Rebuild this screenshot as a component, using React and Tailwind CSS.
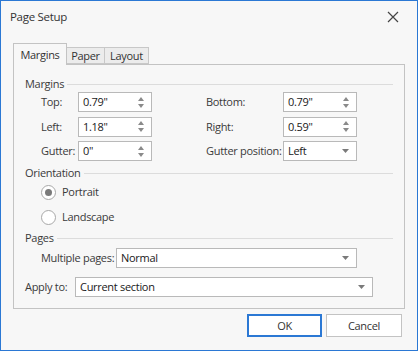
import React from "react";

const font = { fontFamily: '"Segoe UI", "Open Sans", "Noto Sans", sans-serif' };

function SpinUpDown() {
    return (
        <div className="flex flex-col items-center gap-[3px] pr-[7px]">
            <svg width="6" height="4" viewBox="0 0 6 4"><path d="M3 0 L6 4 L0 4 Z" fill="#8a8a8a" /></svg>
            <svg width="6" height="4" viewBox="0 0 6 4"><path d="M0 0 L6 0 L3 4 Z" fill="#8a8a8a" /></svg>
        </div>
    );
}

function DropArrow() {
    return (
        <div className="pr-[7px]">
            <svg width="7" height="4" viewBox="0 0 7 4"><path d="M0 0 L7 0 L3.5 4 Z" fill="#7a7a7a" /></svg>
        </div>
    );
}

function Field({ value, width, kind }) {
    return (
        <div className={`flex shrink-0 items-center justify-between h-[20px] bg-white border border-[#b9b9b9] ${width}`}>
            <span className="pl-[4px] text-[#202020] whitespace-nowrap">{value}</span>
            {kind === "spin" ? <SpinUpDown /> : <DropArrow />}
        </div>
    );
}

function Row({ label, labelWidth, children }) {
    return (
        <div className="flex items-center">
            <span className={`${labelWidth} shrink-0 whitespace-nowrap text-[#3a3a3a]`}>{label}</span>
            {children}
        </div>
    );
}

function Section({ title }) {
    return (
        <div className="flex items-center gap-[3px] h-[14px]">
            <span className="text-[#3a3a3a] whitespace-nowrap">{title}</span>
            <div className="flex-1 h-px bg-[#dcdcdc] mr-[11px]" />
        </div>
    );
}

function Radio({ label, checked }) {
    return (
        <div className="flex items-center gap-[6px] h-[16px]">
            <div className="w-[15px] h-[15px] rounded-full border border-[#a8a8a8] bg-white flex items-center justify-center">
                {checked && <div className="w-[7px] h-[7px] rounded-full bg-[#7a7a7a]" />}
            </div>
            <span className="text-[#3a3a3a]">{label}</span>
        </div>
    );
}

export default function App() {
    return (
        <div style={font} className="w-[418px] h-[351px] bg-[#f7f7f7] border border-[#2b78d4] flex flex-col text-[11px] leading-[14px] tracking-[-0.3px] text-[#333]">
            <div className="flex items-center justify-between h-[31px] pl-[9px] pr-[18px]">
                <span className="text-[#333] text-[11.5px]">Page Setup</span>
                <svg width="12" height="12" viewBox="0 0 12 12"><path d="M1 1 L11 11 M11 1 L1 11" stroke="#444" strokeWidth="1.2" /></svg>
            </div>

            <div className="flex items-end ml-[12px] mt-[10px] h-[22px]">
                <div className="relative z-10 -mb-px h-[22px] w-[54px] flex items-center justify-center border border-b-0 border-[#c3c3c3] bg-[#f7f7f7] text-[#333]">Margins</div>
                <div className="h-[17px] w-[38px] flex items-center justify-center border border-l-0 border-[#c8c8c8] bg-[#ececec] text-[#333]">Paper</div>
                <div className="h-[17px] w-[44px] flex items-center justify-center border border-l-0 border-[#c8c8c8] bg-[#ececec] text-[#333]">Layout</div>
            </div>

            <div className="ml-[12px] w-[392px] h-[245px] border border-[#c3c3c3] pl-[11px] pt-[12px] flex flex-col">
                <Section title="Margins" />
                <div className="flex pl-[16px] pt-[1px]">
                    <div className="flex flex-col gap-[4.5px] w-[165px]">
                        <Row label="Top:" labelWidth="w-[37px]"><Field value={'0.79"'} width="w-[74px]" kind="spin" /></Row>
                        <Row label="Left:" labelWidth="w-[37px]"><Field value={'1.18"'} width="w-[74px]" kind="spin" /></Row>
                        <Row label="Gutter:" labelWidth="w-[37px]"><Field value={'0"'} width="w-[74px]" kind="spin" /></Row>
                    </div>
                    <div className="flex flex-col gap-[4.5px]">
                        <Row label="Bottom:" labelWidth="w-[77px]"><Field value={'0.79"'} width="w-[74px]" kind="spin" /></Row>
                        <Row label="Right:" labelWidth="w-[77px]"><Field value={'0.59"'} width="w-[74px]" kind="spin" /></Row>
                        <Row label="Gutter position:" labelWidth="w-[77px]"><Field value="Left" width="w-[74px]" kind="drop" /></Row>
                    </div>
                </div>

                <div className="mt-[5px]"><Section title="Orientation" /></div>
                <div className="flex flex-col gap-[9px] pl-[16px] pt-[4px]">
                    <Radio label="Portrait" checked />
                    <Radio label="Landscape" />
                </div>

                <div className="mt-[6px]"><Section title="Pages" /></div>
                <div className="pl-[16px] pt-[3px]">
                    <Row label="Multiple pages:" labelWidth="w-[75px]"><Field value="Normal" width="w-[241px]" kind="drop" /></Row>
                </div>
                <div className="pt-[9px]">
                    <Row label="Apply to:" labelWidth="w-[50px]"><Field value="Current section" width="w-[298px]" kind="drop" /></Row>
                </div>
            </div>

            <div className="flex justify-end gap-[4px] pr-[15px] pt-[5px]">
                <button className="w-[75px] h-[23px] bg-white border-2 border-[#2b78d4] text-[#333]">OK</button>
                <button className="w-[76px] h-[23px] bg-white border border-[#c3c3c3] text-[#333]">Cancel</button>
            </div>
        </div>
    );
}
